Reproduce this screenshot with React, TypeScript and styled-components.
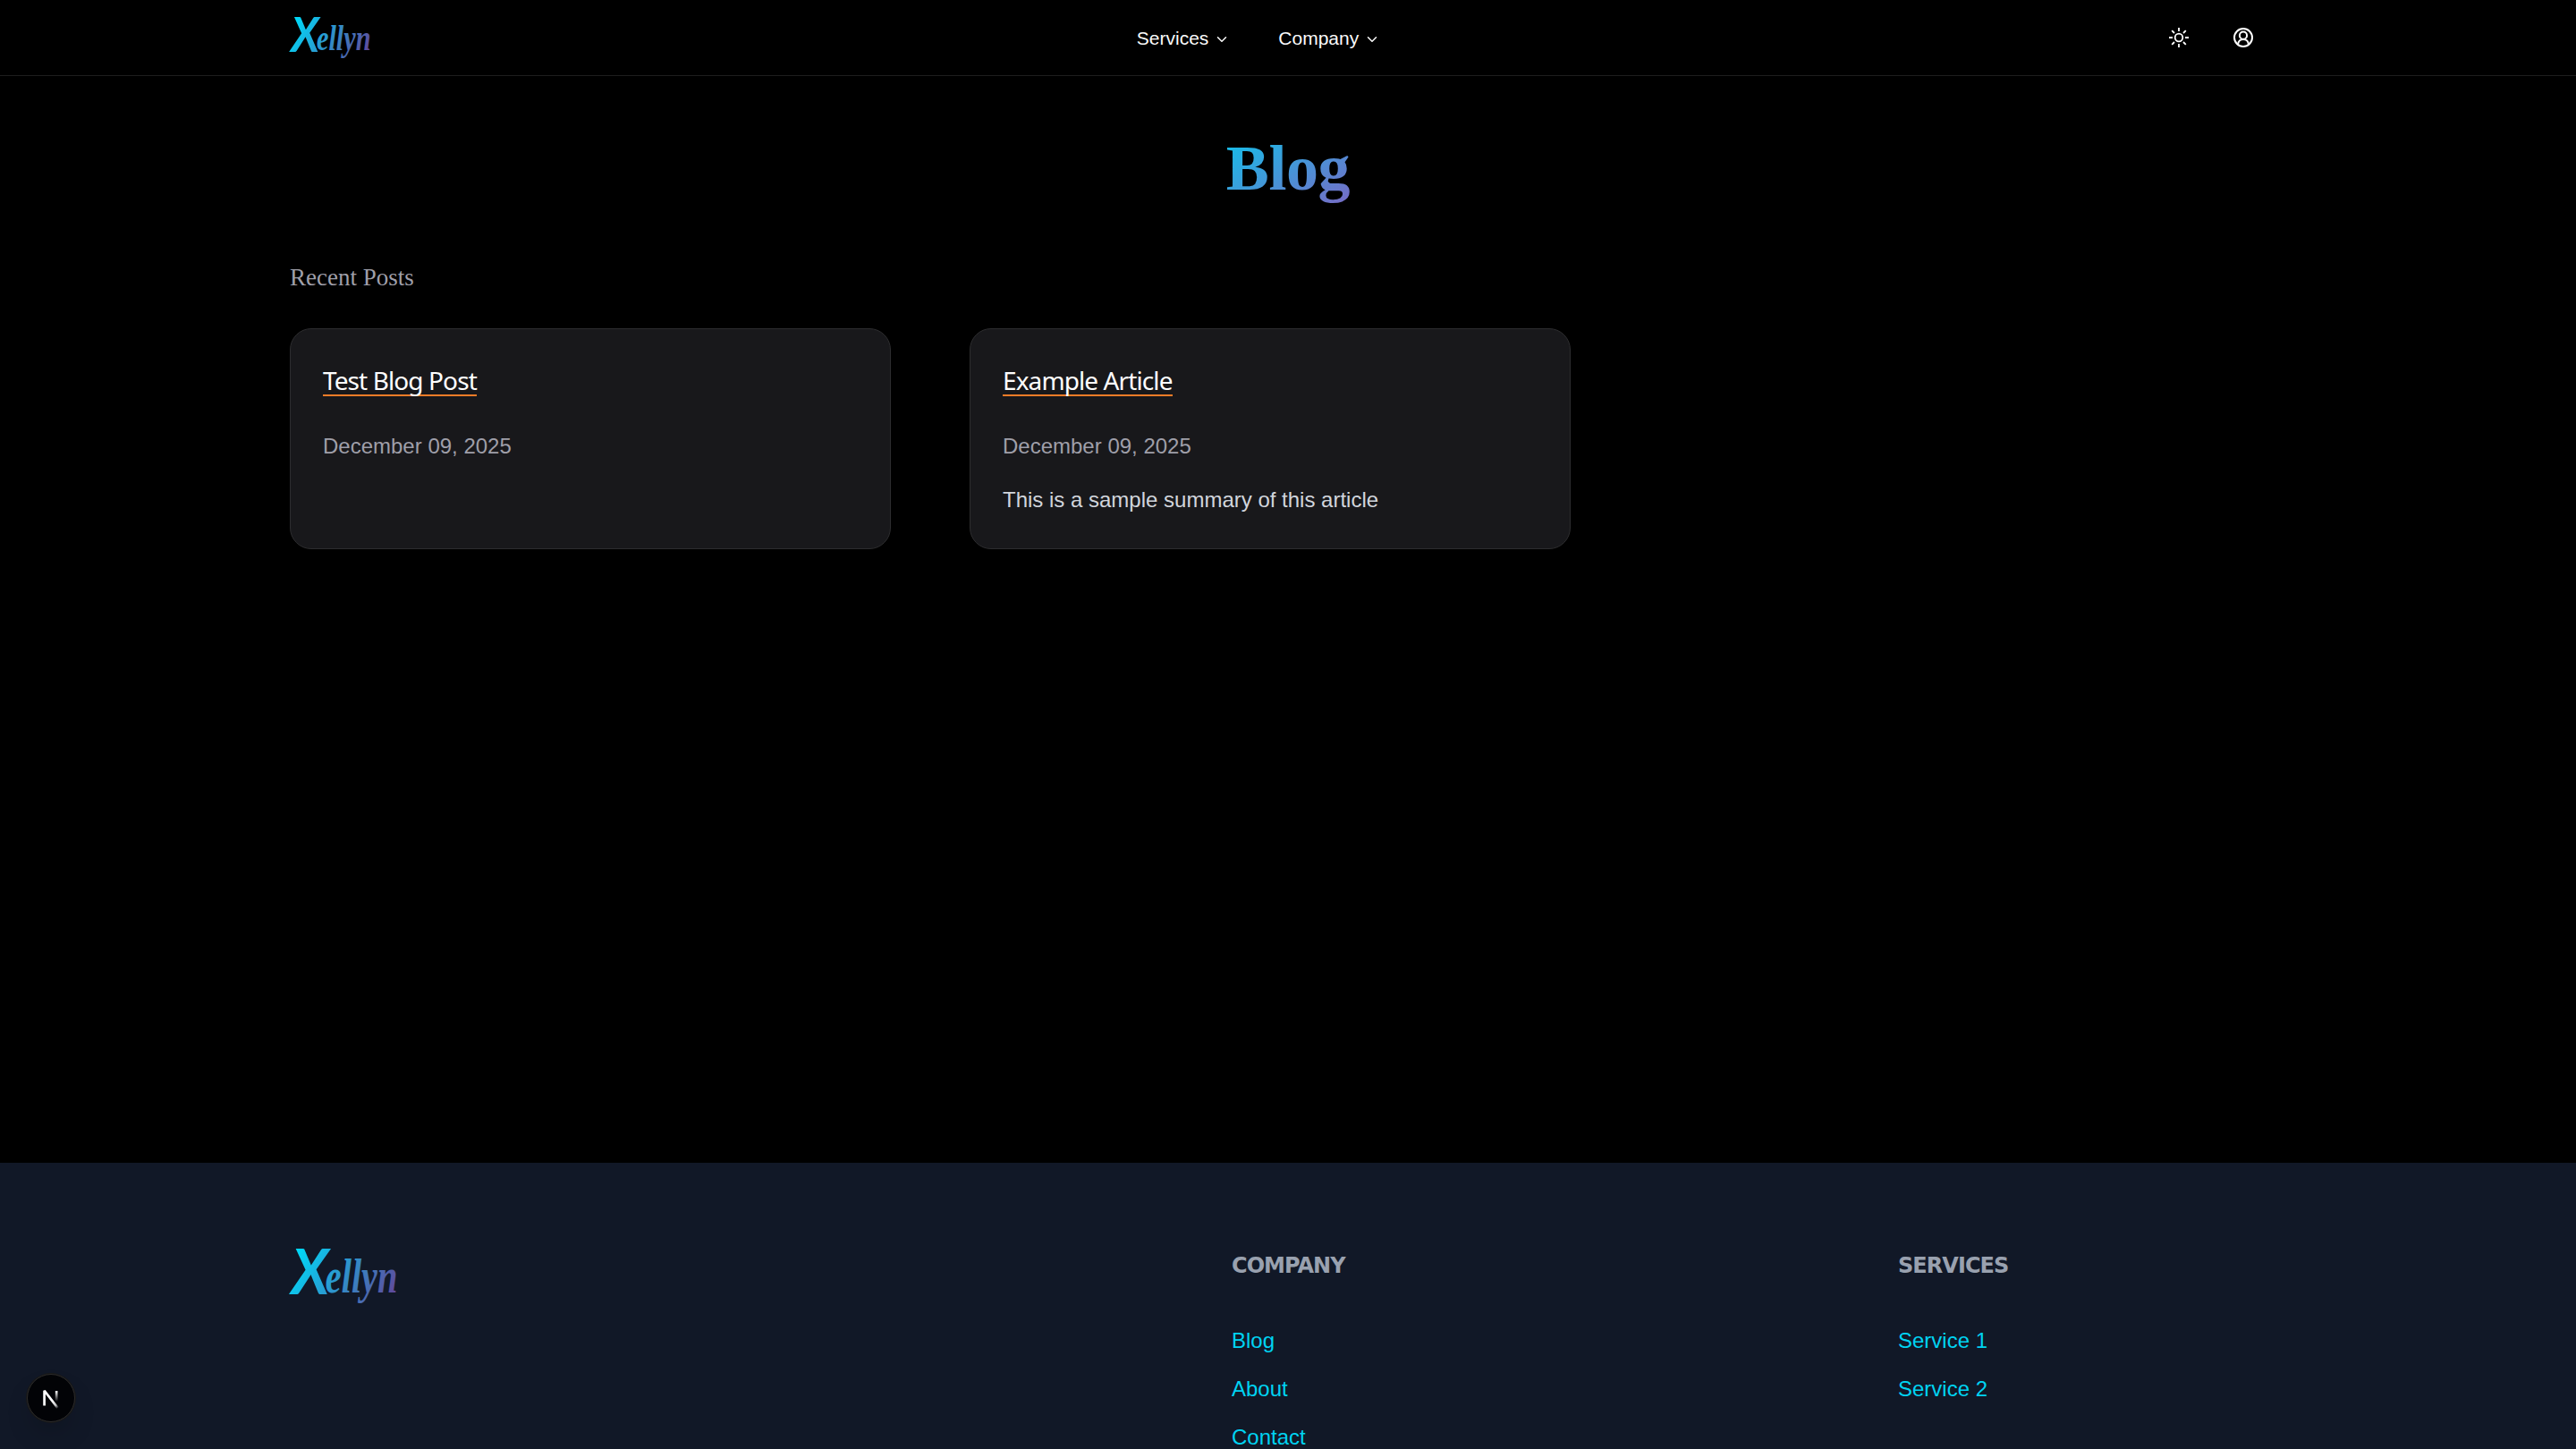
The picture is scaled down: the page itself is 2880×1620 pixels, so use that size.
import React from "react";
import styled, { createGlobalStyle } from "styled-components";
import { ChevronDown } from "lucide-react";

const sans = `"Liberation Sans", Arial, sans-serif`;
const serif = `"Liberation Serif", "Times New Roman", serif`;
const display = `"Noto Sans", Tahoma, sans-serif`;
const displayBold = `"DejaVu Sans", Verdana, sans-serif`;

const GlobalStyle = createGlobalStyle`
  *, *::before, *::after { box-sizing: border-box; }
  body { margin: 0; background: #000; color: #fff; font-family: ${sans}; overflow: hidden; }
  h1, h2, h3, p, ul { margin: 0; padding: 0; }
  ul { list-style: none; }
  a { color: inherit; text-decoration: none; }
`;

const Page = styled.div`
  height: 1620px;
  display: flex;
  flex-direction: column;
  overflow: hidden;
`;

const Header = styled.header`
  flex: none;
  height: 85px;
  padding: 0 324px;
  display: grid;
  grid-template-columns: 1fr auto 1fr;
  border-bottom: 1px solid #1d1d1d;
`;

const HeaderBrand = styled.a`
  display: flex;
  padding-top: 19px;
`;

const Nav = styled.nav`
  display: flex;
  align-items: center;
  gap: 54px;
  padding: 2px 66px 0 0;
`;

const NavItem = styled.a`
  display: flex;
  align-items: center;
  gap: 6px;
  font-size: 21px;
  line-height: 30px;
  color: #fafafa;

  svg {
    margin-top: 2px;
  }
`;

const Actions = styled.div`
  display: flex;
  justify-content: flex-end;
  align-items: center;
  gap: 48px;
  padding-right: 36px;
`;

const IconButton = styled.button`
  display: flex;
  padding: 0;
  border: 0;
  background: none;
  color: #fff;
`;

const Main = styled.main`
  flex: none;
  height: 1215px;
  padding: 58px 324px 0;
`;

const PageTitle = styled.h1`
  width: fit-content;
  margin: 0 auto;
  font: 700 72px/90px ${serif};
  letter-spacing: -0.4px;
  color: transparent;
  background: linear-gradient(to bottom right, #0cc6ec, #7a68c4);
  background-clip: text;
`;

const SectionTitle = styled.h2`
  margin-top: 57px;
  font: 400 27px/40px ${serif};
  color: #9f9fa9;
`;

const PostGrid = styled.div`
  display: grid;
  grid-template-columns: repeat(3, 672px);
  gap: 88px;
  margin-top: 37px;
`;

const Card = styled.article`
  height: 247px;
  padding: 37px 36px;
  border: 1px solid #2d2d2f;
  border-radius: 24px;
  background: #18181b;
`;

const CardTitle = styled.h3`
  width: fit-content;
  height: 38px;
  border-bottom: 2px solid #f57c28;
  font: 400 28px/40px ${display};
  letter-spacing: -0.9px;
  white-space: nowrap;
  color: #fff;
`;

const PostDate = styled.p`
  margin-top: 38px;
  font-size: 24px;
  line-height: 36px;
  color: #9f9fa9;
`;

const Summary = styled.p`
  margin-top: 24px;
  font-size: 24px;
  line-height: 36px;
  color: #d1d5dc;
`;

const Footer = styled.footer`
  flex: none;
  height: 320px;
  padding: 96px 0 0 324px;
  display: grid;
  grid-template-columns: 1053px 745px 1fr;
  background: #111827;
`;

const FooterHeading = styled.h3`
  padding-top: 1px;
  font: 700 24px/36px ${displayBold};
  letter-spacing: -0.95px;
  color: #99a1af;
`;

const LinkList = styled.ul`
  display: flex;
  flex-direction: column;
  gap: 18px;
  margin-top: 48px;
  font-size: 24px;
  line-height: 36px;
  color: #00d3f2;
`;

const DevBadge = styled.div`
  position: fixed;
  left: 30px;
  top: 1536px;
  width: 54px;
  height: 54px;
  display: flex;
  align-items: center;
  justify-content: center;
  border-radius: 50%;
  border: 1px solid #2b2b2c;
  background: #020306;
  box-shadow: 0 0 0 1px #171717, 0 16px 32px -8px rgba(0, 0, 0, 0.24);
`;

const WordmarkSvg = styled.svg`
  display: block;
  overflow: visible;
  font-style: italic;
  font-weight: 700;
`;

const WordmarkInitial = styled.tspan`
  font-family: Lato, sans-serif;
  font-size: 70px;
`;

const WordmarkTail = styled.tspan`
  font-family: ${serif};
  font-size: 54px;
`;

function Wordmark({ width, id }: { width: number; id: string }) {
  return (
    <WordmarkSvg width={width} height={width / 1.94} viewBox="0 0 120 62" role="img" aria-label="Xellyn">
      <defs>
        <linearGradient id={id} gradientUnits="userSpaceOnUse" x1="10" y1="0" x2="112" y2="56">
          <stop offset="0" stopColor="#00d8f8" />
          <stop offset="1" stopColor="#5f4a9c" />
        </linearGradient>
      </defs>
      <text fill={`url(#${id})`} y="51">
        <WordmarkInitial x="1.5" textLength="42" lengthAdjust="spacingAndGlyphs">X</WordmarkInitial>
        <WordmarkTail x="39.500" y="49" textLength="80" lengthAdjust="spacingAndGlyphs">ellyn</WordmarkTail>
      </text>
    </WordmarkSvg>
  );
}

function SunIcon() {
  return (
    <svg width="24" height="24" viewBox="0 0 24 24" fill="none" stroke="currentColor" strokeWidth="1.8">
      <circle cx="12" cy="12" r="4.3" />
      <path d="M12 1v4M12 19v4M1 12h4M19 12h4M4.2 4.2l2.8 2.8M17 17l2.8 2.8M4.2 19.8L7 17M17 7l2.8-2.8" />
    </svg>
  );
}

function AccountIcon() {
  return (
    <svg width="24" height="24" viewBox="0 0 24 24" fill="none" stroke="currentColor" strokeWidth="2">
      <circle cx="12" cy="12" r="10" />
      <circle cx="12" cy="9.7" r="4.1" />
      <path d="M6 20c.2-3.700 2.700-6.100 6-6.100s5.800 2.400 6 6.100" />
    </svg>
  );
}

function NextMark() {
  return (
    <svg width="54" height="54" viewBox="0 0 54 54" fill="none">
      <defs>
        <linearGradient id="diag" gradientUnits="userSpaceOnUse" x1="28" y1="31" x2="35" y2="39">
          <stop stopColor="#fff" />
          <stop offset="0.6" stopColor="#fff" stopOpacity="0.75" />
          <stop offset="1" stopColor="#fff" stopOpacity="0" />
        </linearGradient>
        <linearGradient id="bar" gradientUnits="userSpaceOnUse" x1="0" y1="19" x2="0" y2="31">
          <stop stopColor="#fff" />
          <stop offset="1" stopColor="#fff" stopOpacity="0" />
        </linearGradient>
      </defs>
      <path d="M19.300 35.800V18.400L34.800 38.500" stroke="url(#diag)" strokeWidth="2.800" strokeLinejoin="bevel" />
      <path d="M33.400 18.800V32" stroke="url(#bar)" strokeWidth="2.800" />
    </svg>
  );
}

const posts = [
  { title: "Test Blog Post", date: "December 09, 2025", summary: "" },
  { title: "Example Article", date: "December 09, 2025", summary: "This is a sample summary of this article" },
];

const footerGroups = [
  { heading: "COMPANY", links: ["Blog", "About", "Contact"] },
  { heading: "SERVICES", links: ["Service 1", "Service 2"] },
];

export default function App() {
  return (
    <Page>
      <GlobalStyle />
      <Header>
        <HeaderBrand><Wordmark width={91} id="brand-top" /></HeaderBrand>
        <Nav>
          {["Services", "Company"].map((label) => (
            <NavItem key={label}>
              {label}
              <ChevronDown size={18} strokeWidth={2} />
            </NavItem>
          ))}
        </Nav>
        <Actions>
          <IconButton aria-label="Theme"><SunIcon /></IconButton>
          <IconButton aria-label="Account"><AccountIcon /></IconButton>
        </Actions>
      </Header>
      <Main>
        <PageTitle>Blog</PageTitle>
        <SectionTitle>Recent Posts</SectionTitle>
        <PostGrid>
          {posts.map((post) => (
            <Card key={post.title}>
              <CardTitle>{post.title}</CardTitle>
              <PostDate>{post.date}</PostDate>
              {post.summary && <Summary>{post.summary}</Summary>}
            </Card>
          ))}
        </PostGrid>
      </Main>
      <Footer>
        <Wordmark width={121} id="brand-bottom" />
        {footerGroups.map((group) => (
          <div key={group.heading}>
            <FooterHeading>{group.heading}</FooterHeading>
            <LinkList>
              {group.links.map((link) => (
                <li key={link}><a>{link}</a></li>
              ))}
            </LinkList>
          </div>
        ))}
      </Footer>
      <DevBadge><NextMark /></DevBadge>
    </Page>
  );
}
